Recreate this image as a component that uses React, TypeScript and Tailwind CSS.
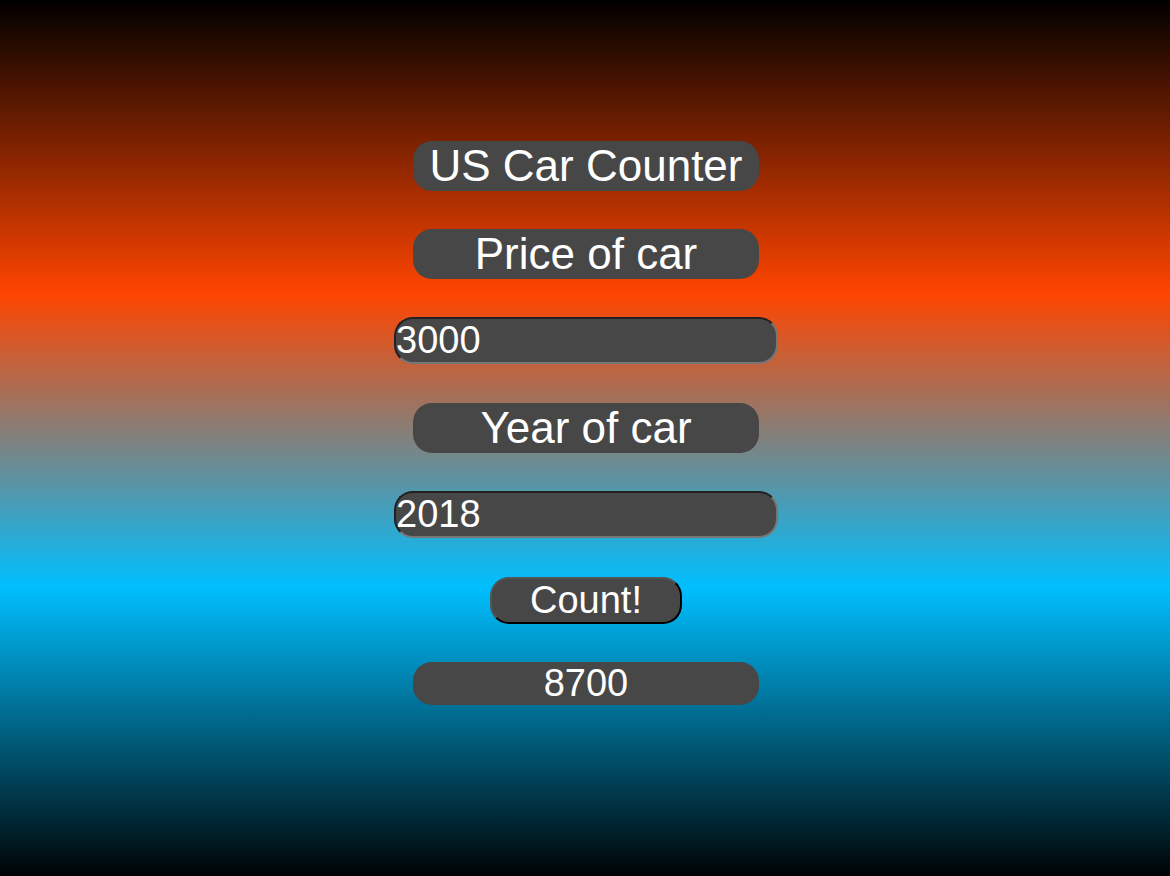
import { useState } from "react";
import type { FormEvent } from "react";

const labelStyle =
  "flex h-[50px] w-[346px] max-w-full items-center justify-center rounded-[19px] bg-[#474747] text-[44px] leading-[50px]";
const inputStyle =
  "h-[47px] w-[384px] max-w-full rounded-[19px] border-2 [border-style:inset] border-[#767676] bg-[#474747] text-[38px] leading-[43px] text-white outline-none";

export default function App() {
  const [price, setPrice] = useState("3000");
  const [year, setYear] = useState("2018");
  const [result, setResult] = useState("8700");

  const count = (event: FormEvent) => {
    event.preventDefault();
    setResult(String(Number(price) + 5700));
  };

  return (
    <main className="min-h-screen bg-[linear-gradient(black,orangered_33.5%,deepskyblue_67%,black_100.5%)] pt-[141px] pb-16 pl-[2px] font-['Liberation_Sans',Arial,sans-serif] text-white">
      <form onSubmit={count} className="flex flex-col items-center gap-[38px]">
        <h1 className={labelStyle}>US Car Counter</h1>
        <label htmlFor="price" className={labelStyle}>
          Price of car
        </label>
        <div className="flex h-12 max-w-full items-start">
          <input
            id="price"
            type="text"
            inputMode="numeric"
            value={price}
            onChange={(e) => setPrice(e.target.value)}
            className={inputStyle}
          />
        </div>
        <label htmlFor="year" className={labelStyle}>
          Year of car
        </label>
        <div className="flex h-12 max-w-full items-start">
          <input
            id="year"
            type="text"
            inputMode="numeric"
            value={year}
            onChange={(e) => setYear(e.target.value)}
            className={inputStyle}
          />
        </div>
        <button
          type="submit"
          className="h-[47px] w-48 rounded-[19px] border-2 [border-style:outset] border-black bg-[#474747] text-[38px] leading-[43px]"
        >
          Count!
        </button>
        <output
          htmlFor="price year"
          className="flex h-[43px] w-[346px] max-w-full items-center justify-center rounded-[19px] bg-[#474747] text-[38px] leading-[43px]"
        >
          {result}
        </output>
      </form>
    </main>
  );
}
